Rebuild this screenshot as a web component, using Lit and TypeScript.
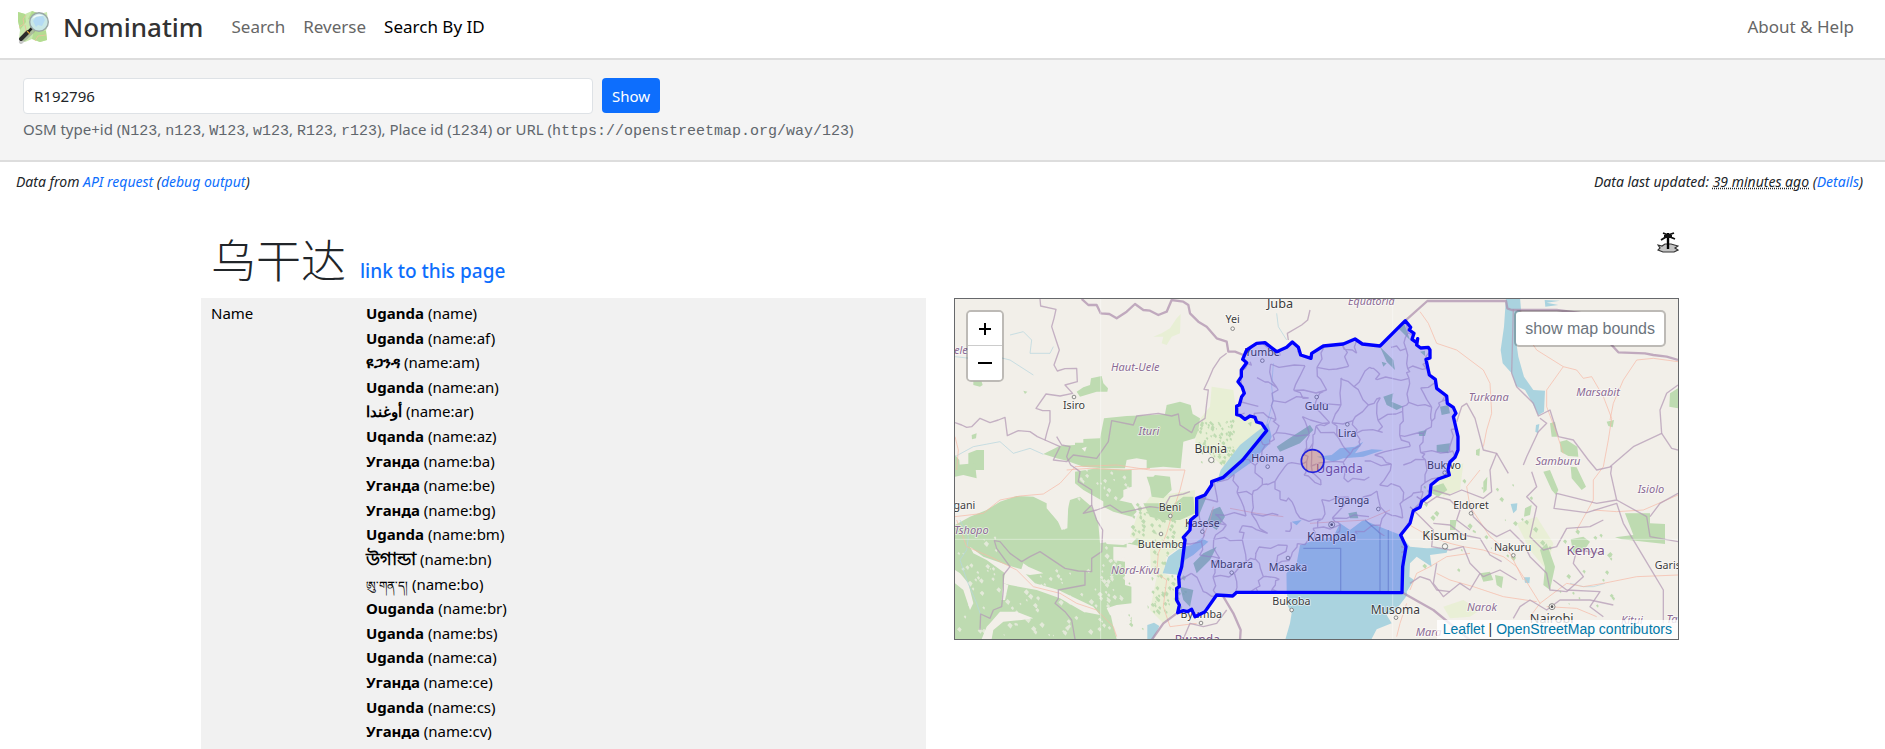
import { LitElement, html, css, svg } from "lit";
import { customElement, state } from "lit/decorators.js";

const NAMES: [string, string, string?][] = [
  ["Uganda", "name"],
  ["Uganda", "name:af"],
  ["ዩጋንዳ", "name:am"],
  ["Uganda", "name:an"],
  ["أوغندا", "name:ar"],
  ["Uqanda", "name:az"],
  ["Уганда", "name:ba"],
  ["Уганда", "name:be"],
  ["Уганда", "name:bg"],
  ["Uganda", "name:bm"],
  ["উগান্ডা", "name:bn", "large"],
  ["ཨུ་གན་ད།", "name:bo", "small"],
  ["Ouganda", "name:br"],
  ["Uganda", "name:bs"],
  ["Uganda", "name:ca"],
  ["Уганда", "name:ce"],
  ["Uganda", "name:cs"],
  ["Уганда", "name:cv"],
];

const OUTLINE =
  "M950,422 935,400 920,396 915,382 900,378 885,388 870,376 860,374 860,348 868,345 875,320 883,310 876,290 864,275 874,260 874,240 890,218 878,208 890,180 905,170 920,160 945,158 980,185 1010,172 1027,156 1045,172 1052,195 1083,205 1085,190 1120,168 1180,162 1215,147 1237,162 1290,168 1366,92 1382,112 1378,120 1392,130 1386,148 1400,158 1403,146 1400,165 1412,174 1435,172 1440,180 1440,204 1428,208 1438,255 1456,268 1460,295 1490,318 1492,340 1510,352 1518,370 1510,380 1524,440 1524,480 1515,502 1500,516 1494,540 1498,555 1465,567 1443,585 1440,615 1415,635 1410,652 1390,662 1380,700 1352,735 1368,770 1358,830 1356,908 860,907 848,918 800,915 765,965 735,980 725,958 712,965 700,962 683,968 688,945 680,930 680,895 688,890 686,860 695,830 705,750 700,742 720,720 722,690 740,675 740,625 765,615 785,585 785,575 820,562 878,510Z";

const FORESTS = [
  "M280,492 330,467 375,465 375,458 400,458 400,447 450,445 462,385 530,378 590,376 645,372 650,345 690,335 722,345 728,372 750,385 745,420 735,445 700,455 692,535 640,530 590,535 590,510 560,505 530,510 525,535 460,535 400,530 350,512 320,505Z",
  "M375,545 440,535 545,540 545,590 520,600 520,620 500,640 470,640 400,600 375,580Z M590,560 610,560 615,555 660,560 665,600 640,625 605,620 600,590Z",
  "M15,705 60,680 110,660 150,635 200,618 250,620 290,640 290,655 320,690 345,720 355,650 360,630 390,620 425,650 445,700 450,760 515,750 545,760 560,745 580,750 575,775 490,770 490,810 525,815 525,885 545,890 545,940 500,945 470,955 480,975 510,990 510,1047 15,1047 15,880 40,900 60,960 70,940 55,880 30,850 15,840Z",
  "M55,490 80,480 102,480 102,540 55,540Z M15,495 28,510 30,540 15,540Z",
  "M380,305 400,292 420,285 423,265 455,258 460,280 474,295 472,305 440,305 390,320Z",
  "M15,525 75,520 80,565 40,555 15,560Z M40,550 55,535 70,540 65,555Z",
  "M580,640 640,640 660,650 700,620 730,620 735,670 690,690 640,690 600,680Z",
  "M460,620 545,640 560,665 545,680 490,665 460,650Z",
  "M2025,670 2100,670 2100,700 2145,702 2145,762 2015,748 1995,742 2050,735Z",
  "M1830,455 1850,450 1882,470 1885,500 1855,498 1832,485Z M2160,310 2184,295 2184,355 2158,350Z M1800,400 1815,395 1822,440 1805,440Z",
  "M1780,545 1800,540 1825,600 1818,615 1805,600Z M1862,530 1880,532 1908,590 1895,600 1865,565Z",
  "M1445,590 1480,580 1492,600 1465,620 1445,610Z M1500,690 1520,690 1515,720 1500,720Z M1590,850 1620,845 1630,870 1600,875Z M1635,855 1660,860 1655,895 1640,885Z M1770,780 1790,760 1815,830 1800,900 1780,885 1785,830Z M1862,748 1900,740 1920,755 1900,785 1870,790Z M1725,655 1745,645 1740,675 1722,680Z",
  "M70,275 95,275 98,285 90,290 70,285Z M65,435 80,430 78,445 66,448Z M220,302 232,305 225,312Z M893,400 905,395 903,410Z",
  "M1970,395 1992,390 1988,412 1975,408Z M1578,480 1590,475 1588,498 1578,495Z M1600,575 1612,560 1610,600 1600,610Z",
];

const CLEARINGS = [
  "M295,640 355,640 352,715 335,720 320,685 300,665Z",
  "M60,770 100,800 180,828 215,838 225,850 255,880 325,900 430,950 450,975 400,965 330,925 260,900 180,885 160,880 165,850 110,810 70,790Z",
  "M120,1000 150,965 200,965 250,985 215,990 160,995 130,1020 125,1047 95,1047 110,1010Z",
  "M160,880 175,885 165,930 155,930Z",
  "M210,850 220,820 235,830 280,850 240,855Z",
  "M395,475 410,470 405,485Z",
  "M460,740 500,735 545,755 520,765 470,762Z M530,760 600,775 605,870 590,930 600,1000 560,1015 545,1000 545,880 530,870Z",
  "M480,965 510,970 530,1010 525,1047 500,1047 490,1010Z",
];

const PALE = [
  "M785,290 850,300 860,375 915,385 945,420 870,475 820,530 775,490 735,470 740,400 780,350Z",
  "M600,620 735,600 735,680 700,745 690,770 650,800 640,850 690,870 680,960 640,1000 600,960 620,860 580,840 590,760 540,740 560,680Z",
  "M610,140 635,130 660,115 680,85 692,72 690,130 665,140 650,165 635,160 640,140Z",
  "M1480,950 1540,930 1590,960 1560,980 1500,985Z M1460,560 1540,520 1530,600 1480,620Z M1700,700 1760,680 1810,760 1790,840 1740,780Z M2025,670 2100,670 2090,700 2040,705Z",
];

const WATER = [
  "M812,540 870,465 920,425 955,400 965,440 955,465 900,520 850,555 800,580Z",
  "M1050,765 1080,755 1150,740 1170,700 1200,720 1240,690 1300,715 1352,735 1380,770 1430,775 1495,773 1490,788 1440,795 1445,830 1400,800 1380,820 1378,860 1392,870 1370,905 1372,915 1345,950 1330,965 1310,975 1325,1000 1280,1018 1262,1052 1005,1052 1020,1000 1025,970 1012,945 1010,850 1040,820Z",
  "M638,850 655,800 690,775 725,765 755,745 775,755 730,795 705,810 690,855Z",
  "M592,1005 612,998 628,1008 608,1052 592,1052Z",
  "M1668,22 1710,22 1718,120 1700,165 1705,200 1722,260 1750,300 1785,302 1782,365 1765,376 1745,335 1725,300 1698,288 1685,250 1658,220 1652,180 1662,110Z",
  "M1100,500 1145,495 1170,475 1215,470 1240,455 1215,490 1265,478 1300,480 1240,500 1180,505 1150,515Z",
  "M1682,642 1702,640 1700,660 1690,670Z M1722,862 1740,862 1738,880 1725,878Z M1758,405 1768,402 1764,430 1756,425Z M1784,30 1830,32 1790,38 1825,45 1786,50Z M1025,695 1055,690 1040,706Z",
];

const PROVINCES = [
  "M270,27 272,48 318,58 312,85 305,110 318,150 328,180 312,225 322,243 345,236 380,235 382,275 345,285 368,310 330,318 288,312 258,355 278,362 300,362 300,395 290,430 285,450 262,440 240,425 205,422 172,437 165,382 145,390 120,398 90,385 65,410 50,412 35,405 15,398",
  "M285,450 330,470 310,510 350,515 370,495 440,505 475,455 485,392 550,405 560,378 625,370 665,378 685,372 690,405 725,428 735,405 765,385 770,340 775,300 762,298 775,270 790,235 810,205 830,190",
  "M320,440 335,465 360,470 350,500 362,525 390,545 385,575 425,600 425,645 400,670 440,660 480,645 515,668 600,650 640,655 660,620 700,612 720,605",
  "M425,645 440,690 458,720 455,785 425,805 425,845 385,843 345,835 315,815 270,785 240,800 215,815 180,790 150,755 133,752 140,775 180,830 160,855 160,900 155,950 130,960 120,985 92,972 90,1020",
  "M405,845 405,885 325,900 325,925 315,940 345,965 365,990 375,1047",
  "M1080,60 1073,90 1055,105 1012,130 1015,150",
  "M1690,58 1685,250 1700,290 1750,340 1765,378 1800,360 1825,440 1870,450 1915,510 1940,540 1985,530 1982,550 2000,630 1940,640 1820,610 1812,655 1910,668 2000,640 2020,700 2080,800 2140,900 2140,1000",
  "M1520,395 1535,350 1550,340 1575,385 1600,480 1640,490 1675,550",
  "M1640,490 1620,540 1625,605 1600,625 1535,600 1500,615 1450,600",
  "M1720,525 1730,500 1765,425 1790,400 1770,385",
  "M2184,285 2150,310 2130,360 2135,430 2050,470 1980,530",
  "M2135,430 2165,475 2184,480",
  "M2000,630 2090,680 2100,740 2184,755",
  "M1745,545 1760,590 1730,620 1760,650 1740,740 1780,780 1820,770 1850,715 1920,710 1960,690",
  "M1380,650 1430,700 1450,720 1445,770 1500,780 1540,770 1560,820 1600,860 1650,840 1700,870",
  "M1450,700 1500,705 1540,735 1590,745 1620,795 1655,815",
  "M1460,820 1450,880 1480,920 1530,880 1560,900 1590,850",
  "M1560,640 1570,680 1610,720 1640,740 1680,720 1720,760 1740,800 1790,850 1800,900 1850,905 1900,860 1870,820 1880,780 1960,790",
  "M1400,620 1430,640 1460,620 1500,630 1530,660 1520,690 1560,720",
  "M1380,880 1410,860 1440,870 1460,900 1500,905",
  "M1690,985 1710,950 1740,930 1790,960 1830,930 1920,930 1990,945",
  "M1810,870 1850,900 1950,905 1920,950 1960,980",
  "M2184,610 2130,640 2100,680",
  "M700,1047 720,1000 760,1010 800,1000 830,960",
];

const COUNTRY_LINES = [
  "M395,27 415,45 440,45 452,70 478,72 500,85 530,65 555,42 580,60 600,62 625,75 650,65 665,30 700,35 715,45 720,70 745,95 770,110 800,145 830,155 835,185 855,185 880,195",
  "M1366,92 1432,33 1668,33 1672,55 1685,60 1820,60 1900,70 1985,165 2005,187 2085,190 2110,195 2150,200 2184,210",
  "M1358,908 1450,960 1560,1050",
  "M683,968 640,1000 605,1050",
  "M820,920 850,970 872,1020 870,1050",
];

const ROADS = [
  "M15,680 100,670 150,630 210,618 280,612 330,580 375,530 500,525 600,540 705,540 690,600 670,660 650,730 625,790 620,850 650,870 640,950 660,1010 740,1000",
  "M20,690 50,770 120,800 200,840 250,890 330,910 380,940 440,960 490,1010 500,1040",
  "M15,440 25,480 20,540",
  "M350,540 420,535 520,540 600,535",
  "M1410,65 1435,100 1460,160 1520,180 1600,240 1620,280 1625,370 1610,420 1600,470",
  "M1712,60 1720,120 1760,180 1840,230 1790,300 1790,350 1820,430 1840,490",
  "M1840,230 1880,240 1900,265 1925,260 1960,320 1985,385 1975,450 1960,530 1930,570 1930,630 1880,720",
  "M2184,215 2110,205 2060,210 2020,270 1990,340 1980,390",
  "M1770,940 1850,880 1900,890 1960,880 2060,860 2184,855",
  "M1770,940 1720,860 1700,830 1660,800 1600,780 1540,770 1500,760 1440,740 1370,700",
  "M1460,850 1500,870 1570,890 1660,920 1760,935",
  "M1380,900 1400,850 1440,830 1490,800 1560,790",
  "M1340,1040 1350,1000 1370,940",
  "M1590,540 1550,590 1560,650 1620,740 1680,790 1720,870",
  "M1930,660 2000,665 2080,660 2184,615",
  "M1770,940 1740,980 1790,1000 M1790,950 1880,955 1940,980",
  "M1080,700 1160,695 1250,690 1320,660",
  "M840,655 920,670 1000,680",
  "M760,740 780,690 790,650",
];

const RIVERS = [
  "M15,500 70,470 150,455 190,490 240,475 280,493",
  "M30,690 55,740 50,780 30,810 50,870 80,940 92,975",
  "M180,135 220,125 245,150 240,190 300,190 310,170",
  "M15,200 60,205 120,195 180,210 250,255",
  "M980,70 985,110 1010,150",
  "M965,380 940,440 970,330 965,290 970,220",
  "M1860,880 1900,890 1930,890 1965,880",
];

const DARK_WOODS =
  "M785,660 810,650 825,680 800,720 770,700Z M760,790 800,770 780,810 740,850 730,820Z M980,470 1010,450 1080,405 1090,420 1050,460 990,485Z M1290,170 1330,210 1335,240 1310,215Z M1470,350 1495,345 1500,370 1475,375Z M1460,465 1500,460 1495,490 1460,485Z M1405,425 1430,420 1425,438 1408,438Z M1360,92 1380,150 1340,110Z M690,890 730,900 720,950 700,930Z M1295,215 1310,220 1300,230Z M1195,670 1220,665 1225,685 1200,685Z M1410,185 1425,182 1425,198Z M1300,320 1330,310 1325,335 1360,350 1340,360 1310,345Z M740,625 770,620 745,680Z";

type Label = [string, number, number, number, string];
const LABELS: Label[] = [
  ["Juba", 990, 54, 38, "city"],
  ["Yei", 848, 100, 32, "city"],
  ["Yumbe", 937, 198, 32, "city"],
  ["Isiro", 372, 358, 32, "city"],
  ["Bunia", 782, 490, 36, "city"],
  ["Hoima", 953, 515, 32, "city"],
  ["Gulu", 1100, 360, 32, "city"],
  ["Lira", 1192, 440, 32, "city"],
  ["Bukwo", 1482, 536, 32, "city"],
  ["gani", 43, 657, 32, "city"],
  ["Beni", 660, 662, 32, "city"],
  ["Kasese", 757, 711, 32, "city"],
  ["Butembo", 633, 773, 32, "city"],
  ["Mbarara", 845, 833, 32, "city"],
  ["Masaka", 1014, 843, 32, "city"],
  ["Bukoba", 1024, 945, 32, "city"],
  ["Byumba", 754, 984, 32, "city"],
  ["Iganga", 1205, 643, 32, "city"],
  ["Kampala", 1145, 753, 36, "city"],
  ["Eldoret", 1563, 657, 32, "city"],
  ["Kisumu", 1484, 750, 38, "city"],
  ["Nakuru", 1688, 782, 32, "city"],
  ["Musoma", 1336, 971, 36, "city"],
  ["Nairobi", 1805, 1000, 38, "city"],
  ["Garissa", 2170, 836, 32, "city"],
  ["Uganda", 1168, 550, 38, "country"],
  ["Kenya", 1907, 795, 40, "country"],
  ["Rwanda", 742, 1062, 36, "country"],
  ["Uele", 22, 193, 32, "region"],
  ["Haut-Uele", 556, 244, 33, "region"],
  ["Ituri", 597, 436, 33, "region"],
  ["Equatoria", 1264, 44, 32, "region"],
  ["Turkana", 1616, 332, 33, "region"],
  ["Marsabit", 1944, 319, 33, "region"],
  ["Samburu", 1824, 525, 33, "region"],
  ["Isiolo", 2103, 608, 33, "region"],
  ["Tshopo", 64, 732, 33, "region"],
  ["Nord-Kivu", 556, 852, 33, "region"],
  ["Narok", 1596, 962, 33, "region"],
  ["Mara", 1436, 1037, 33, "region"],
  ["Kitui", 2046, 1003, 33, "region"],
  ["Tana", 2185, 1000, 33, "region"],
];

const TOWNS: [number, number][] = [
  [848, 116], [937, 212], [372, 321], [953, 530], [1100, 321], [1192, 403], [661, 678],
  [633, 732], [757, 725], [845, 848], [1014, 804], [1025, 960], [753, 999], [1285, 657],
  [1563, 670], [1690, 796], [1338, 983], [1484, 548],
];

/** Small repeatable random source, so the generated detail is stable. */
function seeded(seed: number) {
  let s = seed;
  return () => {
    s = (s * 16807) % 2147483647;
    return s / 2147483647;
  };
}

/** Irregular honeycomb of district borders. */
function districtMesh(): string {
  const rnd = seeded(41);
  const cols = 15;
  const rows = 19;
  const pts: [number, number][][] = [];
  for (let r = 0; r < rows; r++) {
    pts.push([]);
    for (let c = 0; c < cols; c++) {
      pts[r].push([650 + c * 62 + rnd() * 56, 70 + r * 48 + rnd() * 42]);
    }
  }
  const wobble = (a: [number, number], b: [number, number]) => {
    const step = (t: number) => {
      const x = a[0] + (b[0] - a[0]) * t + (rnd() - 0.5) * 18;
      const y = a[1] + (b[1] - a[1]) * t + (rnd() - 0.5) * 18;
      return `${Math.round(x)},${Math.round(y)}`;
    };
    return `M${a.map(Math.round)}L${step(0.33)} ${step(0.66)} ${b.map(Math.round)}`;
  };
  let d = "";
  for (let r = 0; r < rows - 1; r++) {
    for (let c = 0; c < cols - 1; c++) {
      if (rnd() > 0.3) d += wobble(pts[r][c], pts[r + 1][c]);
      if ((r + c) % 2 === 0) d += wobble(pts[r][c], pts[r][c + 1]);
    }
  }
  return d;
}

/** Loose speckle: n small patches inside a box. */
function speckle(rnd: () => number, x: number, y: number, w: number, h: number, n: number, size: number): string {
  let d = "";
  for (let i = 0; i < n; i++) {
    const px = Math.round(x + rnd() * w);
    const py = Math.round(y + rnd() * h);
    const s = 2 + Math.round(rnd() * size);
    d += `M${px},${py}l${s},${-s} ${s},${s} ${-s + 2},${s + 2}z`;
  }
  return d;
}

const rndWoods = seeded(97);
const WOODS =
  speckle(rndWoods, 740, 390, 110, 130, 90, 4) +
  speckle(rndWoods, 600, 640, 110, 330, 130, 5) +
  speckle(rndWoods, 530, 640, 60, 380, 60, 5) +
  speckle(rndWoods, 1400, 560, 400, 300, 30, 6) +
  speckle(rndWoods, 1820, 700, 180, 250, 18, 5);
const rndGaps = seeded(53);
const GAPS =
  speckle(rndGaps, 160, 840, 300, 200, 60, 7) +
  speckle(rndGaps, 20, 740, 120, 290, 30, 6) +
  speckle(rndGaps, 450, 770, 80, 250, 40, 6) +
  speckle(rndGaps, 380, 540, 160, 90, 20, 5);
const DISTRICTS = districtMesh();

@customElement("map-view")
export class MapView extends LitElement {
  static styles = css`
    :host {
      display: block;
      position: relative;
      height: 342px;
      border: 1px solid #66686b;
      overflow: hidden;
      background: #f2efe9;
      font-family: "Liberation Sans", Arial, sans-serif;
    }
    .canvas {
      display: block;
      width: 100%;
      height: 100%;
    }
    .forest { fill: #bedbb1; }
    .dark { fill: #8fc0a0; opacity: 0.8; }
    .clearing { fill: #f2efe9; }
    .pale { fill: #e5efcf; opacity: 0.75; }
    .water { fill: #aad3df; }
    .line { fill: none; stroke-linejoin: round; }
    .road { stroke: #f6b9a6; stroke-width: 3; opacity: 0.7; }
    .river { stroke: #b5d6de; stroke-width: 3; opacity: 0.7; }
    .province { stroke: #b49bb6; stroke-width: 4; opacity: 0.75; }
    .country-line { stroke: #ab8cab; stroke-width: 7; opacity: 0.7; }
    .district { stroke: #b09ab8; stroke-width: 4; opacity: 0.65; }
    .lake-line { stroke: #6f8fbb; stroke-width: 4; opacity: 0.6; }
    .seam { stroke: #fff; stroke-width: 2; opacity: 0.6; }
    .label {
      font-family: "Noto Sans", sans-serif;
      text-anchor: middle;
      paint-order: stroke;
      stroke: #fff;
      stroke-opacity: 0.65;
      stroke-width: 5px;
      stroke-linejoin: round;
    }
    .city { fill: #3c3c3c; }
    .country { fill: #7d5688; }
    .region { fill: #8b6a94; font-style: italic; }
    .town { fill: #f7f5f2; stroke: #777; stroke-width: 2.5; }
    .area {
      fill: #3333ff;
      fill-opacity: 0.25;
      stroke: #0000ff;
      stroke-width: 10;
      stroke-linejoin: round;
    }
    .centre {
      fill: #ff7800;
      fill-opacity: 0.25;
      stroke: #2222dd;
      stroke-width: 5;
    }
    .zoom {
      position: absolute;
      top: 11px;
      left: 11px;
      display: flex;
      flex-direction: column;
      border: 2px solid rgba(0, 0, 0, 0.22);
      border-radius: 5px;
      background-clip: padding-box;
    }
    .zoom-button {
      width: 34px;
      height: 34px;
      padding: 0;
      border: 0;
      background: #fff;
      display: grid;
      place-items: center;
    }
    .zoom-button:first-child {
      border-bottom: 1px solid #ccc;
      border-radius: 3px 3px 0 0;
    }
    .zoom-button:last-child { border-radius: 0 0 3px 3px; }
    .bounds {
      position: absolute;
      top: 11px;
      right: 12px;
      height: 37px;
      padding: 0 9px;
      border: 2px solid rgba(0, 0, 0, 0.22);
      border-radius: 5px;
      background: #fff;
      background-clip: padding-box;
      color: #6c757d;
      font: 16px/33px "Liberation Sans", Arial, sans-serif;
    }
    .credit {
      position: absolute;
      right: 0;
      bottom: 0;
      padding: 0 6px;
      background: rgba(255, 255, 255, 0.8);
      color: #333;
      font-size: 14px;
      line-height: 19px;
      white-space: nowrap;
    }
    .credit-link {
      color: #0078a8;
      text-decoration: none;
    }
  `;

  render() {
    const lines = (items: string[], cls: string) =>
      items.map((d) => svg`<path class="line ${cls}" d=${d} />`);
    return html`
      <svg class="canvas" viewBox="15 27 2169 1020" preserveAspectRatio="xMidYMid slice" role="img" aria-label="Map of Uganda">
        <defs><clipPath id="inside"><path d=${OUTLINE} /></clipPath></defs>
        <g class="pale">${PALE.map((d) => svg`<path d=${d} />`)}</g>
        <g class="forest">${FORESTS.map((d) => svg`<path d=${d} />`)}<path d=${WOODS} /></g>
        <g class="clearing">${CLEARINGS.map((d) => svg`<path d=${d} />`)}<path d=${GAPS} opacity=".7" /></g>
        <g class="dark" clip-path="url(#inside)"><path d=${DARK_WOODS} /></g>
        <g class="water">${WATER.map((d) => svg`<path d=${d} />`)}</g>
        ${lines(RIVERS, "river")} ${lines(ROADS, "road")} ${lines(PROVINCES, "province")}
        ${lines(COUNTRY_LINES, "country-line")}
        <g clip-path="url(#inside)">
          <path class="line district" d=${DISTRICTS} />
          <path class="water" d="M1010,850 1040,820 1050,795 1065,775 1090,765 1120,768 1150,752 1170,730 1190,745 1215,730 1240,738 1270,728 1300,738 1330,735 1352,745 1360,910 1010,910Z" />
          <path class="line lake-line" d="M1060,775H1172V905M1290,730V905M1315,720V905M1245,690 1290,730" />
        </g>
        <path class="line seam" d="M452,27V1047M1328,27V1047M15,748H2184" />
        ${TOWNS.map(([x, y]) => svg`<circle class="town" cx=${x} cy=${y} r="5.5" />`)}
        <circle class="town" cx="784" cy="510" r="8" />
        <circle class="town" cx="1485" cy="769" r="8" />
        ${[[1145, 704], [1806, 950]].map(
          ([x, y]) => svg`<circle class="town" cx=${x} cy=${y} r="9" /><circle cx=${x} cy=${y} r="4" fill="#555" />`
        )}
        ${LABELS.map(
          ([text, x, y, size, kind]) =>
            svg`<text class="label ${kind}" x=${x} y=${y} font-size=${size}>${text}</text>`
        )}
        <path class="area" d=${OUTLINE} />
        <circle class="centre" cx="1088" cy="513" r="34" />
      </svg>
      <div class="zoom">
        <button class="zoom-button" aria-label="Zoom in">
          <svg width="14" height="14" viewBox="0 0 14 14"><path d="M7 1v12M1 7h12" stroke="#000" stroke-width="2" /></svg>
        </button>
        <button class="zoom-button" aria-label="Zoom out">
          <svg width="14" height="14" viewBox="0 0 14 14"><path d="M0 7h14" stroke="#000" stroke-width="2" /></svg>
        </button>
      </div>
      <button class="bounds">show map bounds</button>
      <div class="credit"><a class="credit-link" href="#leaflet">Leaflet</a> | <a class="credit-link" href="#osm">OpenStreetMap contributors</a></div>
    `;
  }
}

@customElement("app-root")
export class AppRoot extends LitElement {
  @state() private query = "R192796";

  static styles = css`
    * { box-sizing: border-box; }
    :host {
      display: flex;
      flex-direction: column;
      min-height: 100vh;
      background: #fff;
      color: #212529;
      font: 15px/24px "Noto Sans", "Open Sans", sans-serif;
    }
    a { color: #0d6efd; text-decoration: none; }
    .navbar {
      display: flex;
      align-items: center;
      height: 60px;
      padding: 0 31px 5px 16px;
      border-bottom: 2px solid #ddd;
    }
    .brand {
      display: flex;
      align-items: center;
      gap: 13px;
      margin-right: 28px;
      color: #333;
      font-size: 26px;
      font-weight: 500;
    }
    .links { display: flex; flex: 1; gap: 18px; }
    .link { color: #666; font-size: 17px; }
    .link.active { color: #000; }
    .link.help { margin-left: auto; }
    .search {
      padding: 18px 23px 19px;
      border-bottom: 2px solid #ddd;
      background: #f4f4f4;
    }
    .form { display: flex; gap: 9px; }
    .query {
      width: 570px;
      height: 36px;
      padding: 0 10px;
      border: 1px solid #dee2e6;
      border-radius: 4px;
      background: #fff;
      color: #212529;
      font: inherit;
    }
    .show {
      height: 35px;
      padding: 0 10px;
      border: 0;
      border-radius: 4px;
      background: #0d6efd;
      color: #fff;
      font: inherit;
    }
    .hint {
      margin: 3px 0 0;
      color: #60666c;
    }
    .code { font: 15px "Liberation Mono", monospace; }
    .status {
      display: flex;
      justify-content: space-between;
      padding: 8px 22px 0 16px;
      font-size: 14px;
      font-style: italic;
    }
    .ago { text-decoration: underline dotted; }
    .page {
      display: flex;
      flex: 1;
      flex-direction: column;
      padding: 0 206px 0 201px;
    }
    .heading {
      display: flex;
      align-items: flex-start;
      justify-content: space-between;
      height: 104px;
      padding-top: 38px;
    }
    .title {
      margin: 0;
      padding-left: 10px;
      font-size: 45px;
      font-weight: 300;
      line-height: 54px;
      font-family: "Noto Sans CJK SC", sans-serif;
    }
    .permalink {
      margin-left: 4px;
      font-family: "Noto Sans", sans-serif;
      font-size: 19px;
      font-weight: 500;
    }
    .columns {
      display: grid;
      flex: 1;
      grid-template-columns: 1fr 1fr;
      gap: 28px;
      align-items: start;
    }
    .panel { align-self: stretch; background: #f1f1f1; color: #000; }
    .details { width: 100%; border-collapse: collapse; }
    .key, .value {
      padding: 3px 10px;
      font-weight: 400;
      text-align: left;
      vertical-align: top;
      line-height: 1.64;
    }
    .key { width: 155px; }
    .row { height: 1.64em; white-space: nowrap; }
    .row-name { font-weight: 700; line-height: 1; }
    .row-name.large { font-size: 18px; }
    .row-name.small { font-size: 12px; font-weight: 400; }
  `;

  render() {
    const code = (t: string) => html`<code class="code">${t}</code>`;
    return html`
      <nav class="navbar">
        <a class="brand" href="#home">
          <svg width="34" height="34" viewBox="0 0 34 34" aria-hidden="true">
            <path d="M2 2 9 4 16 1 24 4 31 2 32 12 30 21 31 30 24 32 16 29 9 32 3 29 4 20 2 11Z" fill="#c9e9ae" />
            <path d="M2 2 9 4 10 12 4 20 2 11Z M16 1 24 4 20 12 12 9Z M18 20 30 21 31 30 24 32 16 29Z" fill="#b3dc91" />
            <path d="M3 17 8 14 7 9 10 5M6 27 10 20 9 15M19 31 22 26 30 25" fill="none" stroke="#e4c59b" />
            <path d="M4 30 16 19" stroke="#888" stroke-opacity=".45" stroke-width="4" stroke-linecap="round" transform="translate(1 2)" />
            <path d="M5 29 12 22" stroke="#2c2c2c" stroke-width="4" stroke-linecap="round" />
            <path d="M12 22 17 17" stroke="#1e1e1e" stroke-width="2.5" />
            <path d="M11 21 14 24" stroke="#d9a545" stroke-width="1.2" />
            <circle cx="23" cy="12" r="9.3" fill="#c9e8e6" stroke="#9aa6a6" stroke-width="1.4" />
            <path d="M17 11 20 7 27 6 29 10 26 16 22 15 20 17Z" fill="#b4daf3" />
            <path d="M16 9a8 8 0 0 1 12-3q-6-1-12 3Z" fill="#f2fbfc" />
          </svg>
          <span>Nominatim</span>
        </a>
        <div class="links">
          <a class="link" href="#search">Search</a>
          <a class="link" href="#reverse">Reverse</a>
          <a class="link active" href="#details">Search By ID</a>
          <a class="link help" href="#help">About &amp; Help</a>
        </div>
      </nav>
      <section class="search">
        <form class="form" @submit=${(e: Event) => e.preventDefault()}>
          <input
            class="query"
            type="text"
            aria-label="OSM type and id"
            .value=${this.query}
            @input=${(e: InputEvent) => (this.query = (e.target as HTMLInputElement).value)}
          />
          <button class="show" type="submit">Show</button>
        </form>
        <p class="hint">
          OSM type+id (${code("N123")}, ${code("n123")}, ${code("W123")}, ${code("w123")}, ${code("R123")},
          ${code("r123")}), Place id (${code("1234")}) or URL (${code("https://openstreetmap.org/way/123")})
        </p>
      </section>
      <div class="status">
        <div>Data from <a href="#api">API request</a> (<a href="#debug">debug output</a>)</div>
        <div>Data last updated: <abbr class="ago" title="39 minutes ago">39 minutes ago</abbr> (<a href="#status">Details</a>)</div>
      </div>
      <main class="page">
        <header class="heading">
          <h1 class="title">乌干达 <a class="permalink" href="#permalink">link to this page</a></h1>
          <svg width="22" height="22" viewBox="0 0 22 22" aria-hidden="true">
            <path d="M1 13 5 14 8 12 14 12 21 14 18 16 21 18 17 20 6 20 1 18 3 16Z" fill="#c4c4c4" stroke="#333" stroke-width="1.2" />
            <path d="M11 1V17" stroke="#000" stroke-width="2.4" />
            <path d="M6 1 11 3 17 1M4 8 9 5 13 5 18 7M7 4 15 4" fill="none" stroke="#111" stroke-width="1.8" />
          </svg>
        </header>
        <div class="columns">
          <div class="panel">
            <table class="details">
              <tr>
                <th class="key" scope="row">Name</th>
                <td class="value">
                  ${NAMES.map(
                    ([name, key, size]) =>
                      html`<div class="row"><span class="row-name ${size ?? ""}">${name}</span> (${key})</div>`
                  )}
                </td>
              </tr>
            </table>
          </div>
          <map-view></map-view>
        </div>
      </main>
    `;
  }
}
